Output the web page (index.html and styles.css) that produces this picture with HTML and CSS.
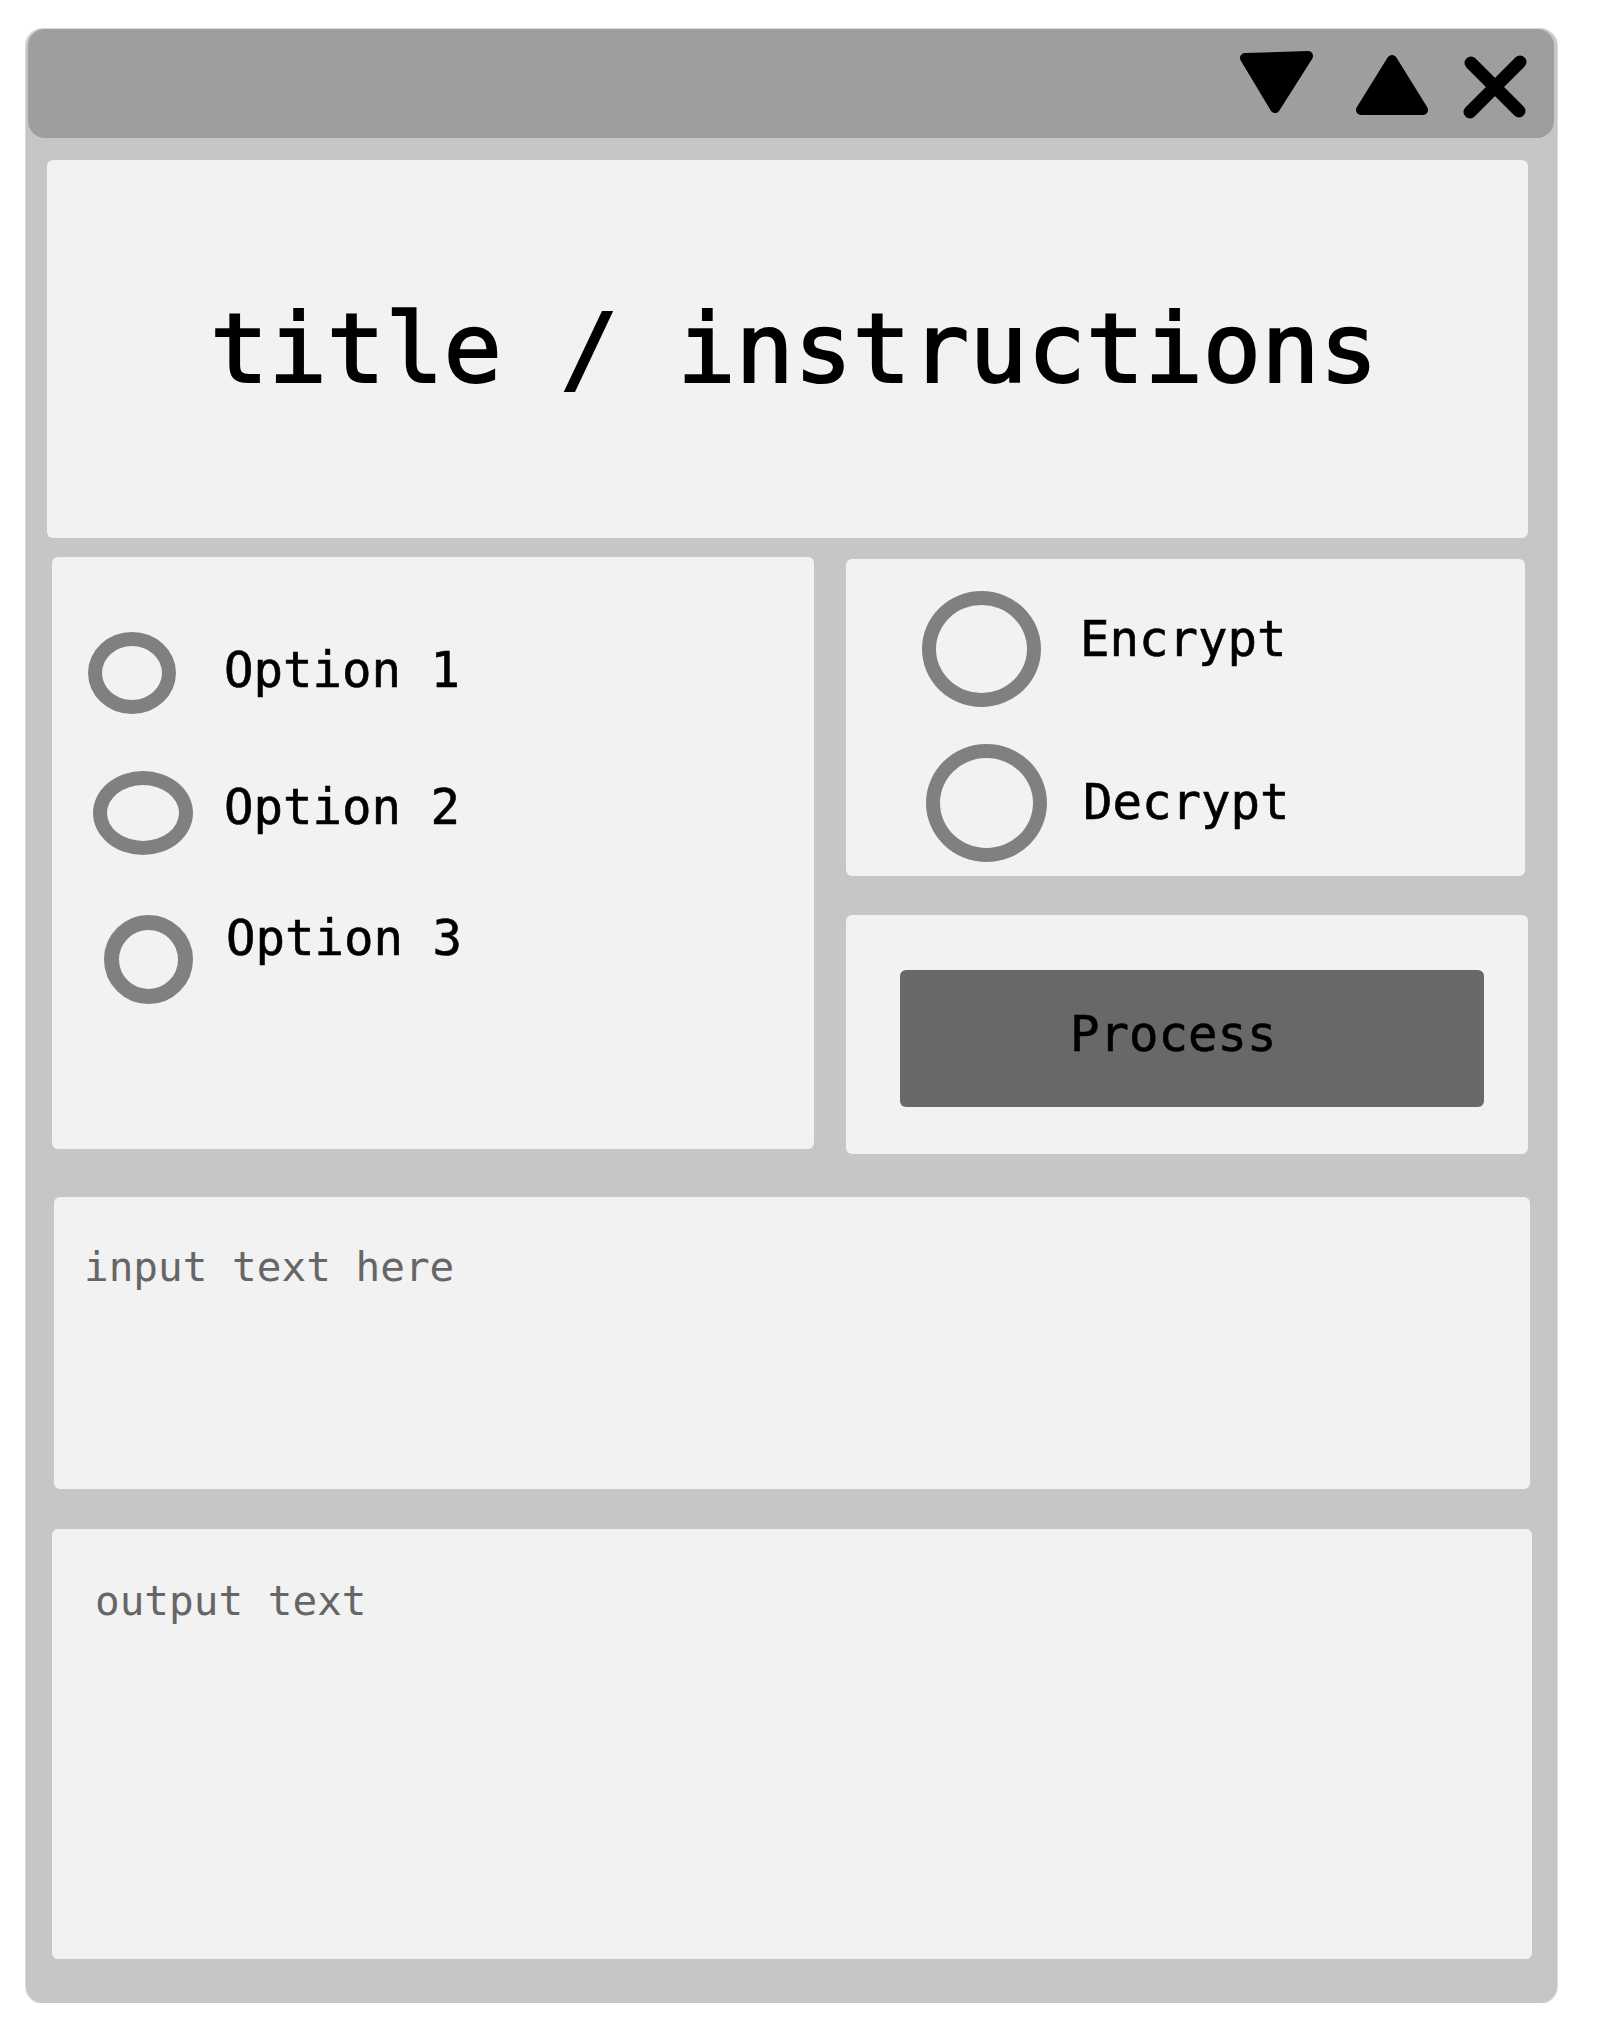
FILE: index.html
```html
<!DOCTYPE html>
<html lang="en">
<head>
<meta charset="utf-8">
<title>Cipher tool wireframe</title>
<link rel="stylesheet" href="styles.css">
</head>
<body>
<div class="window">
  <div class="titlebar">
    <svg class="controls" width="305" height="80" viewBox="1230 45 305 80" aria-hidden="true">
      <path d="M1245 59 L1308 57 L1275 109 Z" fill="#000" stroke="#000" stroke-width="10" stroke-linejoin="round"/>
      <path d="M1392 61 L1423 111 L1361 111 Z" fill="#000" stroke="#000" stroke-width="10" stroke-linejoin="round"/>
      <path d="M1471 64 L1519 112 M1520 63 L1470 113" fill="none" stroke="#000" stroke-width="13" stroke-linecap="round"/>
    </svg>
  </div>
  <div class="content">
    <div class="panel title-panel">
      <h1 class="title">title / instructions</h1>
    </div>
    <div class="middle">
      <div class="panel options-panel">
        <div class="row row-o1"><span class="ring ring-o1"></span><span class="label">Option 1</span></div>
        <div class="row row-o2"><span class="ring ring-o2"></span><span class="label">Option 2</span></div>
        <div class="row row-o3"><span class="ring ring-o3"></span><span class="label">Option 3</span></div>
      </div>
      <div class="right-col">
        <div class="panel mode-panel">
          <div class="row row-enc"><span class="ring ring-enc"></span><span class="label">Encrypt</span></div>
          <div class="row row-dec"><span class="ring ring-dec"></span><span class="label">Decrypt</span></div>
        </div>
        <div class="panel process-panel">
          <div class="button">Process</div>
        </div>
      </div>
    </div>
    <div class="panel input-panel"><span class="hint">input text here</span></div>
    <div class="panel output-panel"><span class="hint">output text</span></div>
  </div>
</div>
</body>
</html>
```

FILE: styles.css
```css
html, body {
  margin: 0;
  padding: 0;
  background: #ffffff;
}

body {
  font-family: "DejaVu Sans Mono", "Liberation Mono", monospace;
  color: #000;
}

.window {
  box-sizing: border-box;
  width: 1531px;
  margin: 29px 0 0 26px;
  padding-bottom: 44px;
  background: #c6c6c6;
  border-radius: 17px;
  box-shadow: 0 0 0 1px #dadada;
}

.titlebar {
  height: 109px;
  margin: 1px 3px 0 2px;
  background: #9e9e9e;
  border-radius: 17px;
  display: flex;
  justify-content: flex-end;
  align-items: flex-start;
  padding: 15px 19px 0 0;
  box-sizing: border-box;
}

.controls {
  display: block;
}

.content {
  padding: 22px 29px 0 21px;
}

.panel {
  background: #f2f2f2;
  border-radius: 6px;
  box-sizing: border-box;
}

.title-panel {
  height: 378px;
  display: flex;
  align-items: center;
  justify-content: center;
}

.title {
  margin: 0 0 0 13px;
  font-weight: normal;
  font-size: 97px;
  line-height: 114px;
  white-space: pre;
  -webkit-text-stroke: 2px #000;
}

.middle {
  display: flex;
  align-items: flex-start;
  margin-top: 19px;
}

.options-panel {
  width: 762px;
  height: 592px;
  margin-left: 5px;
  padding-top: 75px;
  display: flex;
  flex-direction: column;
}

.right-col {
  width: 682px;
  margin-left: 32px;
  margin-top: 2px;
  display: flex;
  flex-direction: column;
}

.mode-panel {
  width: 679px;
  height: 317px;
  padding-top: 32px;
  display: flex;
  flex-direction: column;
}

.process-panel {
  height: 239px;
  margin-top: 39px;
  padding: 55px 44px 0 54px;
}

.button {
  height: 137px;
  background: #686868;
  border-radius: 6px;
  box-sizing: border-box;
  padding: 36px 0 0 170px;
  font-size: 49px;
  line-height: 57px;
  -webkit-text-stroke: 0.6px #000;
}

.row {
  display: flex;
  align-items: flex-start;
}

.ring {
  display: block;
  box-sizing: border-box;
  border: 14px solid #808080;
  border-radius: 50%;
  flex: none;
}

.label {
  font-size: 49px;
  line-height: 57px;
  white-space: pre;
  -webkit-text-stroke: 0.6px #000;
}

.row-o1 { margin-left: 36px; }
.ring-o1 { width: 88px; height: 82px; }
.row-o1 .label { margin: 10px 0 0 48px; }

.row-o2 { margin: 57px 0 0 41px; }
.ring-o2 { width: 100px; height: 84px; }
.row-o2 .label { margin: 8px 0 0 31px; }

.row-o3 { margin: 60px 0 0 52px; }
.ring-o3 { width: 89px; height: 89px; border-width: 15px; }
.row-o3 .label { margin: -5px 0 0 33px; }

.row-enc { margin-left: 76px; }
.ring-enc { width: 119px; height: 116px; }
.row-enc .label { margin: 20px 0 0 39px; }

.row-dec { margin: 37px 0 0 80px; }
.ring-dec { width: 121px; height: 118px; }
.row-dec .label { margin: 30px 0 0 36px; }

.input-panel {
  height: 292px;
  margin: 43px -2px 0 7px;
  padding: 46px 0 0 30px;
}

.output-panel {
  height: 430px;
  margin: 40px -4px 0 5px;
  padding: 48px 0 0 43px;
}

.hint {
  display: block;
  font-size: 41px;
  line-height: 48px;
  color: #666666;
  white-space: pre;
}
```
